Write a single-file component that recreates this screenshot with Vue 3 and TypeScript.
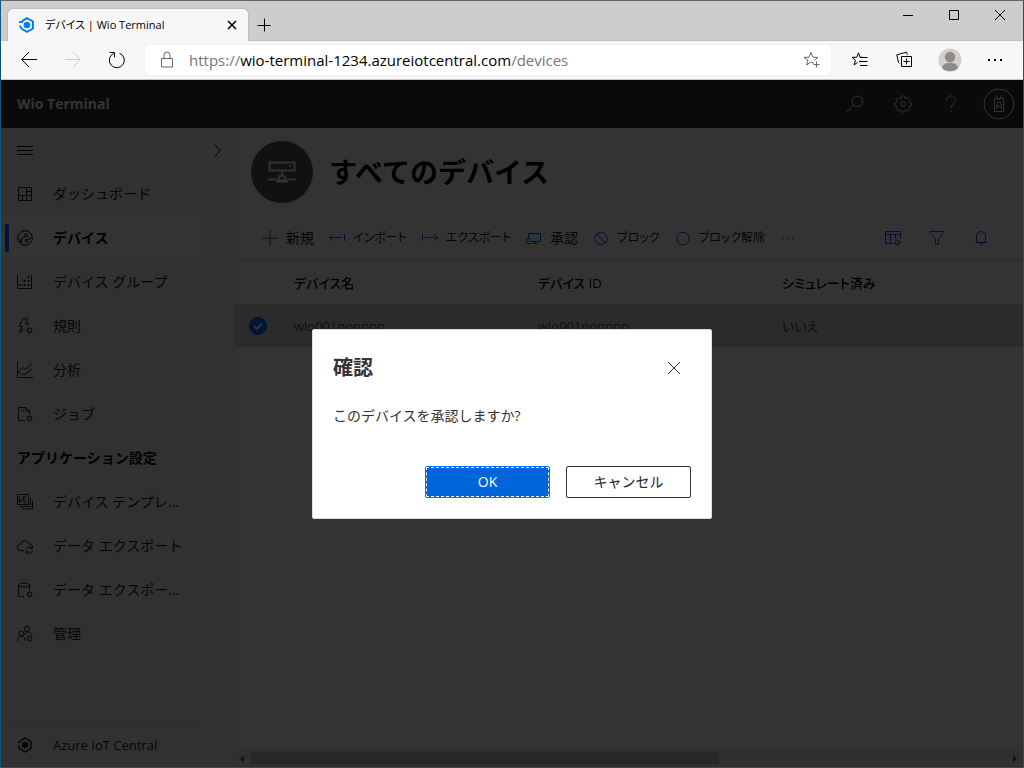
<script setup lang="ts">
import { ref } from 'vue'

interface NavItem {
  label: string
  title?: string
  icon: string
}
interface Command {
  label: string
  icon: string
  kanji?: boolean
}
interface Device {
  name: string
  id: string
  simulated: string
  selected: boolean
}

const gear = 'M12.5 9.2v1M12.5 14.8v1M9.2 12.5h1M14.8 12.5h1M10.2 10.2l.7.7M14.1 14.1l.7.7M10.2 14.8l.7-.7M14.1 10.9l.7-.7M10.6 12.5a1.9 1.9 0 1 0 3.8 0a1.9 1.9 0 1 0-3.8 0'

const mainNav: NavItem[] = [
  { label: 'ダッシュボード', icon: 'M1.5 1.5h13v13h-13zM9.5 1.5v13M1.5 9.5h13M9.5 5.5h5M5.5 9.5v5' },
  { label: 'デバイス', icon: 'M.7 8a7.3 7.3 0 1 0 14.6 0a7.3 7.3 0 1 0-14.6 0M3 12.2l1.500-3.700l3-2M7.5 5.5a1.5 1.5 0 1 0 3 0a1.5 1.5 0 1 0-3 0M8 11a1.5 1.5 0 1 0 3 0a1.5 1.5 0 1 0-3 0M10.800 10l3.800-2.500M4.5 9v4' },
  { label: 'デバイス グループ', icon: 'M.5 1v13.500h14V1M2.500 10.500h2M2.500 11.500h2M6.500 10.500h2M6.500 11.500h2M10.500 10.500h2M10.500 11.500h2M6.500 6.500h2M6.500 7.500h2M10.500 6.500h2M10.500 7.500h2M10.500 2.500h2M10.500 3.500h2' },
  { label: '規則', icon: 'M6 .8h5L8.5 5.5H12L9.5 8.2M6 .8L2 8.5h3L2.5 15L7 10.5' + gear },
  { label: '分析', icon: 'M.5 0v15.5H16M1 10l5-4.500l2.500 2l6.500-6M1 10l3 1.500l3 1.500l8-6' },
  { label: 'ジョブ', icon: 'M8 14.500H1.500v-13h7.500l3.500 3.500v3M9 1.500V5h3.500M4 3.500h1M6 3.500h1M4 5.500h1M6 5.500h1' + gear }
]

const settingsNav: NavItem[] = [
  { label: 'デバイス テンプレ...', title: 'デバイス テンプレート', icon: 'M.5.5h11v10H.5zM13.500 4v8.500H3M15.500 7v8H5M3 8.500l2-3h2M6 3.500a1.300 1.300 0 1 0 2.600 0a1.300 1.300 0 1 0-2.600 0M6.500 7.800a1.200 1.200 0 1 0 2.400 0a1.200 1.200 0 1 0-2.400 0M2.500 2.500v6' },
  { label: 'データ エクスポート', icon: 'M7 12.500H3.500a3 3 0 0 1-.4-6a4.800 4.800 0 0 1 9-1a3.500 3.500 0 0 1 2.900 2.500M9.500 11.500a3 3 0 0 1 5.500-1.500M15.500 8v2.500H13M15.500 12.500a3 3 0 0 1-5.500 1.500M9.300 16v-2.500h2.500' },
  { label: 'データ エクスポー...', title: 'データ エクスポート', icon: 'M1.500 3c0-2.600 11-2.600 11 0s-11 2.600-11 0v10c0 1 2 1.800 5.500 1.800M12.500 3v5' + gear },
  { label: '管理', icon: 'M.5 15c0-3 1.500-4.700 3.800-4.700s3.700 1.700 3.700 4.700M1.800 7.700a2.500 2.500 0 1 0 5 0a2.500 2.500 0 1 0-5 0M7.300 3a2.600 2.600 0 1 0 5.200 0a2.600 2.600 0 1 0-5.200 0M7.500 8.500c1-3.500 6-3.500 7 0' + gear }
]

const commands: Command[] = [
  { label: '新規', icon: 'M8 0v16M0 8h16', kanji: true },
  { label: 'インポート', icon: 'M.7 7.500H13M4 4L.7 7.500L4 11M15.500 4v7' },
  { label: 'エクスポート', icon: 'M3 7.500h12.300M12 4L15.300 7.500L12 11M.5 4v7' },
  { label: '承認', icon: 'M2.500 8V3.500h12v8H5.500M.5 8.500h3.500v5H.5zM5.500 13.500h6M9.500 11.500v2', kanji: true },
  { label: 'ブロック', icon: 'M1.700 8.500a6.300 6.300 0 1 0 12.600 0a6.300 6.300 0 1 0-12.600 0M3.600 4.100l8.800 8.800' },
  { label: 'ブロック解除', icon: 'M1.700 8.500a6.300 6.300 0 1 0 12.600 0a6.300 6.300 0 1 0-12.600 0' }
]

const viewTools: Command[] = [
  { label: '列のオプション', icon: 'M8.500 13.500H.5v-12h15v7M.5 4.500h15M5.500 4.500v9M10.500 4.500v4' + gear },
  { label: 'フィルター', icon: 'M.6 1.500h14.800v1L9.500 8.500v6h-3v-6L.6 2.500z' },
  { label: '通知', icon: 'M3.500 12.500V6a4.500 4.500 0 0 1 9 0v6.500M2 12.500h12M6.500 13a1.500 1.500 0 0 0 3 0' }
]

const devices = ref<Device[]>([
  { name: 'wio001nonppp', id: 'wio001nonppp', simulated: 'いいえ', selected: true }
])
const current = ref('デバイス')
const dialogOpen = ref(true)
</script>

<template>
  <div class="window" lang="ja">
    <header class="tabstrip">
      <div class="tab">
        <svg class="hex" viewBox="0 0 16 16"><path d="M3 4.200L8 1.200L13.900 4.500v7L8 14.800L2.100 11.500" /><path d="M0 5h4M1 8.500l1.200 3" /><circle cx="8" cy="8" r="3.300" /></svg>
        <span class="tab-title">デバイス | Wio Terminal</span>
        <button class="plain" aria-label="タブを閉じる"><svg class="tab-x" viewBox="0 0 10 10"><path d="M1 1l8 8M9 1L1 9" /></svg></button>
      </div>
      <button class="plain new-tab" aria-label="新しいタブ"><svg viewBox="0 0 14 14"><path d="M7.500 .5v13M.5 7.500h13" /></svg></button>
      <div class="window-buttons">
        <button class="plain" aria-label="最小化"><svg viewBox="0 0 12 12"><path d="M1 6.500h10" /></svg></button>
        <button class="plain" aria-label="最大化"><svg viewBox="0 0 12 12"><path d="M1.500 1.500h9v9h-9z" /></svg></button>
        <button class="plain" aria-label="閉じる"><svg viewBox="0 0 12 12"><path d="M1 1l10 10M11 1L1 11" /></svg></button>
      </div>
    </header>

    <div class="toolbar">
      <button class="plain" aria-label="戻る"><svg viewBox="0 0 16 16"><path d="M16 7.500H.7M8 0L.7 7.500L8 15" /></svg></button>
      <button class="plain forward" aria-label="進む"><svg viewBox="0 0 16 16"><path d="M0 7.500h15.300M8 0L15.300 7.500L8 15" /></svg></button>
      <button class="plain" aria-label="更新"><svg class="reload" viewBox="0 0 18 18"><path d="M11.500 2.200a7.500 7.500 0 1 1-6 .3M1.700 1.500h4.800v4.800" /></svg></button>
      <div class="address">
        <svg class="lock" viewBox="0 0 14 18"><path d="M1.500 7.500h11v8.500h-11zM4 7.500V4a3 3 0 0 1 6 0v3.500" /></svg>
        <div class="url" role="textbox" tabindex="0" aria-label="アドレス"><span>https://</span><b>wio-terminal-1234.azureiotcentral.com</b><span>/devices</span></div>
        <button class="plain star" aria-label="お気に入りに追加"><svg viewBox="0 0 18 18"><path d="M11 12.500L8 10.900l-4.500 3.100L5 9.200L1 6.300h5l2-5l2 5h5l-3.500 3M13.500 10.500v6M10.500 13.500h6" /></svg></button>
      </div>
      <div class="browser-tools">
        <button class="plain" aria-label="お気に入り"><svg viewBox="0 0 18 18"><path d="M6.500 11.500l-3.500 2.500L4.500 9.200L1 6.300h4.800L7.500 1.800L9 6.300h3M9 6.500h7.500M8 10.500h8.500M9 14.500h7.500" /></svg></button>
        <button class="plain" aria-label="コレクション"><svg viewBox="0 0 18 18"><path d="M5.500 5.500h10v10h-10zM10.500 7.500v6M7.500 10.500h6M3.500 12.500L2.500 11.500L.8 3.800L10.500 1.200l.8 2.500" /></svg></button>
        <button class="plain" aria-label="プロファイル"><svg class="avatar" viewBox="0 0 24 24"><circle class="avatar-bg" cx="12" cy="12" r="11.500" /><circle cx="12" cy="9" r="5.200" /><path d="M4 20c1-7 15-7 16 0a11.500 11.500 0 0 1-16 0z" /></svg></button>
        <button class="plain" aria-label="設定など"><svg class="dots" viewBox="0 0 16 16"><path d="M1 8h2M7 8h2M13 8h2" /></svg></button>
      </div>
    </div>

    <div class="page">
      <header class="app-header">
        <h1>Wio Terminal</h1>
        <div class="app-tools">
          <button class="plain" aria-label="検索"><svg viewBox="0 0 18 18"><circle cx="11.500" cy="6.500" r="5.300" /><path d="M8 10l-7.500 7" /></svg></button>
          <button class="plain" aria-label="設定"><svg viewBox="0 0 18 18"><path d="M7.500 1h3l.4 2.200l1.400.6l1.900-1.300l2 2l-1.300 1.900l.6 1.400l2 .4v2l-2 .6l-.6 1.400l1.300 1.900l-2 2l-1.900-1.300l-1.400.6L10.500 17h-3l-.4-1.600l-1.400-.6l-1.900 1.300l-2-2l1.300-1.900l-.6-1.400l-2-.6v-2l2-.4l.6-1.400L1.800 4.500l2-2l1.900 1.300l1.400-.6z" /><circle cx="9" cy="9" r="2.500" /></svg></button>
          <button class="plain" aria-label="ヘルプ"><svg viewBox="0 0 18 18"><path d="M4.500 5.500a4.500 4.500 0 0 1 9-.2c0 3.500-4.500 3.700-4.500 7.700M9 15v2" /></svg></button>
          <button class="plain" aria-label="アカウント"><svg class="account" viewBox="0 0 32 32"><circle cx="16" cy="16" r="15" /><path d="M11.500 10.500h9v13h-9zM13 7l3 5l3-5M13.500 21v-2l1-4.500h3l1 4.500v2M14 18.500h4" /></svg></button>
        </div>
      </header>

      <div class="app-body">
        <nav class="side">
          <button class="plain menu" aria-label="メニュー"><svg viewBox="0 0 16 16"><path d="M0 4.500h16M0 8.500h16M0 12.500h16" /></svg></button>
          <a v-for="n in mainNav" :key="n.label" href="#" class="nav-item" :class="{ active: n.label === current }" @click.prevent="current = n.label">
            <svg viewBox="0 0 16 16"><path :d="n.icon" /></svg><span>{{ n.label }}</span>
          </a>
          <h2>アプリケーション設定</h2>
          <a v-for="n in settingsNav" :key="n.label" href="#" class="nav-item" :class="{ active: n.label === current }" :title="n.title" @click.prevent="current = n.label">
            <svg viewBox="0 0 16 16"><path :d="n.icon" /></svg><span>{{ n.label }}</span>
          </a>
          <a href="#" class="nav-item footer-item">
            <svg viewBox="0 0 16 16"><path class="frame" d="M3 4.200L8 1.200L13.900 4.500v7L8 14.800L2.100 11.500M1 5h3M2 8v3.500" /><circle class="core" cx="8" cy="8" r="3" /></svg><span>Azure IoT Central</span>
          </a>
        </nav>
        <aside class="rail">
          <button class="plain" aria-label="展開"><svg viewBox="0 0 16 16"><path d="M4.500 2.500l6 6l-6 6" /></svg></button>
        </aside>

        <main class="content">
          <div class="title-row">
            <div class="badge"><svg viewBox="0 0 32 32"><path d="M3.500 6.500h25v8h-25zM23 10h2M16 15v4M13.500 20h5l1.500 4.500h-8zM2.500 23.500h8M21.500 23.500h8M10 25.500h12" /></svg></div>
            <h2>すべてのデバイス</h2>
          </div>
          <div class="commands">
            <button v-for="c in commands" :key="c.label" class="plain command" :class="{ kanji: c.kanji }"><svg viewBox="0 0 16 16"><path :d="c.icon" /></svg>{{ c.label }}</button>
            <button class="plain more" aria-label="その他"><svg viewBox="0 0 16 16"><path d="M2 8h1.500M7 8h1.500M12 8h1.500" /></svg></button>
            <div class="view-tools">
              <button v-for="t in viewTools" :key="t.label" class="plain" :aria-label="t.label"><svg viewBox="0 0 16 16"><path :d="t.icon" /></svg></button>
            </div>
          </div>
          <div class="table-wrap">
            <table>
              <colgroup><col class="c-check"><col class="c-data"><col class="c-data"><col></colgroup>
              <thead>
                <tr><td></td><th scope="col">デバイス名</th><th scope="col">デバイス ID</th><th scope="col">シミュレート済み</th></tr>
              </thead>
              <tbody>
                <tr v-for="d in devices" :key="d.id">
                  <td><label class="check"><input v-model="d.selected" type="checkbox" :aria-label="d.name"><svg viewBox="0 0 18 18"><path d="M5 9.200l2.800 2.800L13.200 6.500" /></svg></label></td>
                  <td>{{ d.name }}</td><td>{{ d.id }}</td><td>{{ d.simulated }}</td>
                </tr>
              </tbody>
            </table>
          </div>
          <div class="scrollbar">
            <svg viewBox="0 0 16 16"><path d="M10 4v8L6 8z" /></svg>
            <div class="track"><div class="thumb"></div></div>
            <svg viewBox="0 0 16 16"><path d="M6 4v8l4-4z" /></svg>
          </div>
        </main>
      </div>

      <div v-if="dialogOpen" class="overlay">
        <section class="dialog" role="dialog" aria-modal="true" aria-labelledby="dialog-title">
          <div class="dialog-head">
            <h2 id="dialog-title">確認</h2>
            <button class="plain" aria-label="閉じる" @click="dialogOpen = false"><svg viewBox="0 0 14 14"><path d="M1 1l12 12M13 1L1 13" /></svg></button>
          </div>
          <p>このデバイスを承認しますか?</p>
          <div class="dialog-actions">
            <button class="primary" @click="dialogOpen = false">OK</button>
            <button class="secondary" @click="dialogOpen = false">キャンセル</button>
          </div>
        </section>
      </div>
    </div>
  </div>
</template>

<style>
body {
  margin: 0;
}
</style>

<style scoped>
* {
  box-sizing: border-box;
}
.window {
  display: flex;
  flex-direction: column;
  height: 100vh;
  border: 1px solid #11587a;
  border-top-color: #666;
  overflow: hidden;
  font: 14px/20px "Open Sans", "Noto Sans CJK JP", sans-serif;
  color: #000;
}
h1, h2, p {
  margin: 0;
}
svg {
  width: 16px;
  height: 16px;
  flex: none;
  fill: none;
  stroke: currentColor;
  stroke-width: 1;
}
.plain {
  display: flex;
  align-items: center;
  justify-content: center;
  padding: 0;
  border: 0;
  background: none;
  font: inherit;
  color: inherit;
}
.tabstrip {
  display: flex;
  flex: none;
  height: 40px;
  padding-left: 7px;
  background: #cdcdcd;
  border-bottom: 1px solid #c2c2c2;
}
.tab {
  display: flex;
  align-items: center;
  width: 240px;
  height: 32px;
  margin-top: 8px;
  padding: 0 8px 0 11px;
  border-radius: 5px 5px 0 0;
  background: #f7f7f7;
  box-shadow: 0 0 2px #999;
  clip-path: inset(-3px -3px 0 -3px);
}
.tab .plain {
  width: 16px;
  height: 16px;
}
.hex {
  stroke: #0a7bdc;
  stroke-width: 2;
}
.hex circle {
  fill: #0a7bdc;
  stroke: none;
}
.tab-title {
  flex: 1;
  margin-left: 10px;
  font-size: 11px;
  font-feature-settings: "palt";
  white-space: nowrap;
}
.tab-x {
  width: 10px;
  height: 10px;
  stroke-width: 1.6;
}
.new-tab {
  width: 32px;
  height: 32px;
  margin-top: 8px;
}
.new-tab svg {
  width: 14px;
  height: 14px;
}
.window-buttons {
  display: flex;
  margin-left: auto;
}
.window-buttons .plain {
  width: 46px;
  height: 28px;
}
.window-buttons svg {
  width: 12px;
  height: 12px;
}
.toolbar {
  display: flex;
  align-items: center;
  flex: none;
  height: 39px;
  padding-left: 6px;
  background: #f7f7f7;
  border-bottom: 1px solid #c8c8c8;
}
.toolbar > .plain {
  width: 44px;
  height: 32px;
}
.forward {
  color: #ccc;
}
.toolbar .reload {
  width: 18px;
  height: 18px;
}
.address {
  display: flex;
  align-items: center;
  flex: 1;
  height: 30px;
  margin-left: 6px;
  padding: 0 10px 0 15px;
  border-radius: 4px;
  background: #fff;
  box-shadow: 0 0 2px #e2e2e2;
}
.lock {
  width: 14px;
  height: 18px;
  color: #666;
}
.url {
  flex: 1;
  margin-left: 15px;
  font-size: 15px;
  color: #777;
  white-space: nowrap;
}
.url b {
  font-weight: 400;
  color: #000;
}
.star {
  color: #666;
}
.star svg,
.browser-tools svg {
  width: 18px;
  height: 18px;
}
.browser-tools {
  display: flex;
  padding: 0 6px;
}
.browser-tools .plain {
  width: 45px;
  height: 32px;
}
.browser-tools .avatar {
  width: 24px;
  height: 24px;
  stroke: none;
  fill: #8e8a87;
}
.avatar .avatar-bg {
  fill: #d2d0ce;
}
.browser-tools .dots {
  width: 16px;
  height: 16px;
  stroke-width: 2;
}
.page {
  position: relative;
  display: flex;
  flex-direction: column;
  flex: 1;
  min-height: 0;
}
.app-header {
  display: flex;
  align-items: center;
  justify-content: space-between;
  flex: none;
  height: 48px;
  padding: 0 0 0 16px;
  background: #333;
  color: #fff;
}
.app-header h1 {
  font-size: 14px;
  font-weight: 700;
}
.app-tools {
  display: flex;
}
.app-tools .plain {
  width: 48px;
  height: 48px;
}
.app-tools svg {
  width: 18px;
  height: 18px;
}
.app-tools .account {
  width: 32px;
  height: 32px;
}
.app-body {
  display: flex;
  flex: 1;
  min-height: 0;
  background: #fff;
}
.side {
  display: flex;
  flex-direction: column;
  flex: none;
  width: 201px;
  background: #f4f4f4;
  border-right: 1px solid #e4e4e4;
}
.menu {
  width: 48px;
  height: 44px;
}
.nav-item {
  display: flex;
  align-items: center;
  height: 44px;
  padding: 0 12px 0 4px;
  color: #222;
  text-decoration: none;
}
.nav-item::before {
  content: "";
  width: 4px;
  height: 28px;
  margin-right: 8px;
  border-radius: 2px;
}
.nav-item span {
  flex: 1;
  margin-left: 20px;
  white-space: nowrap;
}
.nav-item.active {
  background: #fff;
  color: #000;
  font-weight: 700;
}
.nav-item.active::before {
  background: #0065ff;
}
.side h2 {
  padding-left: 16px;
  font-size: 14px;
  font-weight: 700;
  line-height: 44px;
}
.footer-item {
  height: 45px;
  margin-top: auto;
  border-top: 1px solid #e0e0e0;
  font-size: 13px;
}
.frame {
  stroke-width: 1.5;
}
.core {
  fill: currentColor;
}
.rail {
  flex: none;
  width: 32px;
  background: #f8f8f8;
  border-right: 1px solid #e4e4e4;
}
.rail .plain {
  width: 31px;
  height: 44px;
}
.content {
  display: flex;
  flex-direction: column;
  flex: 1;
  min-width: 0;
}
.title-row {
  display: flex;
  align-items: center;
  height: 88px;
  padding-left: 17px;
}
.badge {
  display: flex;
  align-items: center;
  justify-content: center;
  width: 62px;
  height: 62px;
  border-radius: 50%;
  background: #555;
  color: #fff;
}
.badge svg {
  width: 32px;
  height: 32px;
  stroke-width: 2;
}
.title-row h2 {
  margin-left: 16px;
  font-size: 28px;
  line-height: 40px;
}
.commands {
  display: flex;
  align-items: center;
  gap: 15px;
  height: 45px;
  padding: 0 20px 0 28px;
  border-bottom: 1px solid #d8d8d8;
}
.command {
  gap: 8px;
  font-size: 12px;
  font-feature-settings: "palt";
  white-space: nowrap;
  color: #222;
}
.command.kanji {
  font-size: 14px;
}
.command svg,
.view-tools {
  color: #0050ff;
}
.view-tools {
  display: flex;
  margin-left: auto;
}
.view-tools .plain {
  width: 44px;
  height: 44px;
}
.table-wrap {
  flex: 1;
  min-height: 0;
  overflow: hidden;
}
table {
  width: 100%;
  table-layout: fixed;
  border-collapse: collapse;
  font-size: 13px;
  font-feature-settings: "palt";
}
.c-check {
  width: 60px;
}
.c-data {
  width: 244px;
}
th, td {
  height: 43px;
  padding: 0;
  text-align: left;
  font-weight: 400;
}
th {
  font-weight: 500;
  color: #000;
}
tbody tr {
  background: #d8d8d8;
  color: #444;
}
.check {
  display: grid;
  width: 18px;
  margin-left: 15px;
}
.check input,
.check svg {
  grid-area: 1 / 1;
  width: 18px;
  height: 18px;
  margin: 0;
}
.check input {
  appearance: none;
  border: 1px solid #666;
  border-radius: 50%;
}
.check input:checked {
  border-color: #0065ff;
  background: #0065ff;
}
.check svg {
  stroke: #fff;
  stroke-width: 2;
  pointer-events: none;
}
.scrollbar {
  display: flex;
  align-items: center;
  height: 17px;
  background: #f0f0f0;
}
.scrollbar svg {
  fill: #666;
  stroke: none;
}
.track {
  flex: 1;
}
.thumb {
  width: 62%;
  height: 13px;
  background: #c8c8c8;
}
.overlay {
  position: absolute;
  inset: 0;
  display: flex;
  align-items: center;
  justify-content: center;
  background: rgba(0, 0, 0, 0.8);
}
.dialog {
  width: 400px;
  padding: 20px;
  border: 1px solid #ddd;
  border-radius: 2px;
  background: #fff;
  color: #333;
}
.dialog-head {
  display: flex;
  align-items: center;
  justify-content: space-between;
  height: 36px;
}
.dialog-head h2 {
  font-size: 20px;
  line-height: 32px;
}
.dialog-head .plain {
  width: 34px;
  height: 32px;
}
.dialog-head svg {
  width: 14px;
  height: 14px;
}
.dialog p {
  margin: 20px 0 40px;
}
.dialog-actions {
  display: flex;
  justify-content: flex-end;
  gap: 16px;
}
.dialog-actions button {
  width: 125px;
  height: 32px;
  padding: 0;
  border: 1px solid #333;
  border-radius: 2px;
  background: #fff;
  font: inherit;
  color: #222;
}
.dialog-actions .primary {
  border-color: #006eff;
  background: #0065d9;
  color: #fff;
  outline: 1px dashed #fff;
  outline-offset: -2px;
}
</style>
